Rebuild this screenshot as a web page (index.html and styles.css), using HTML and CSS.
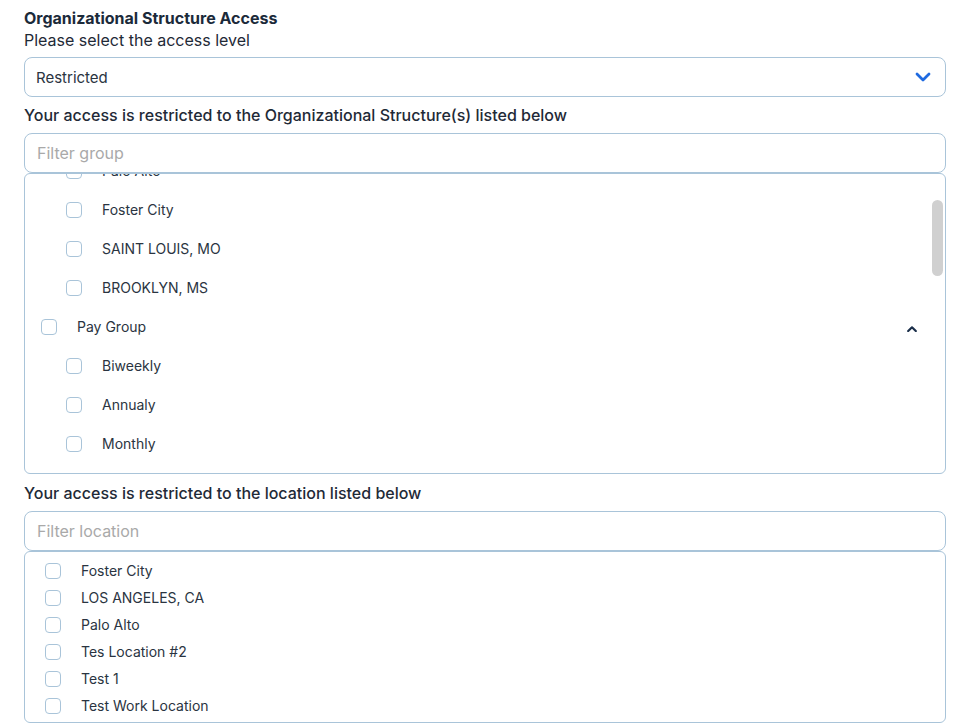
FILE: index.html
```
<!DOCTYPE html>
<html lang="en">
<head>
    <meta charset="UTF-8">
    <meta name="viewport" content="width=device-width, initial-scale=1.0">
    <title>Organizational Structure Access</title>
    <link rel="stylesheet" href="styles.css">
</head>
<body>
    <div class="panel">
        <h2 class="title">Organizational Structure Access</h2>
        <p class="subtitle">Please select the access level</p>

        <div class="select">
            <span>Restricted</span>
            <svg class="select-chevron" width="16" height="10" viewBox="0 0 16 10"><path d="M2 2 L8 8 L14 2" fill="none" stroke="#1f6ae0" stroke-width="2.8" stroke-linecap="round" stroke-linejoin="round"/></svg>
        </div>

        <p class="label">Your access is restricted to the Organizational Structure(s) listed below</p>
        <input class="filter" type="text" placeholder="Filter group">
        <div class="tree-wrap">
            <div class="tree" id="groupTree">
                <div class="row level1"><span class="box"></span><span class="text">Location</span><svg class="caret" width="10" height="6" viewBox="0 0 10 6"><path d="M1.2 5 L5 1.3 L8.8 5" fill="none" stroke="#1b2f4a" stroke-width="2.2" stroke-linecap="round" stroke-linejoin="round"/></svg></div>
                <div class="row level2"><span class="box"></span><span class="text">LOS ANGELES, CA</span></div>
                <div class="row level2"><span class="box"></span><span class="text">Palo Alto</span></div>
                <div class="row level2"><span class="box"></span><span class="text">Foster City</span></div>
                <div class="row level2"><span class="box"></span><span class="text">SAINT LOUIS, MO</span></div>
                <div class="row level2"><span class="box"></span><span class="text">BROOKLYN, MS</span></div>
                <div class="row level1"><span class="box"></span><span class="text">Pay Group</span><svg class="caret" width="10" height="6" viewBox="0 0 10 6"><path d="M1.2 5 L5 1.3 L8.8 5" fill="none" stroke="#1b2f4a" stroke-width="2.2" stroke-linecap="round" stroke-linejoin="round"/></svg></div>
                <div class="row level2"><span class="box"></span><span class="text">Biweekly</span></div>
                <div class="row level2"><span class="box"></span><span class="text">Annualy</span></div>
                <div class="row level2"><span class="box"></span><span class="text">Monthly</span></div>
                <div class="row level1"><span class="box"></span><span class="text">Department</span><svg class="caret" width="10" height="6" viewBox="0 0 10 6"><path d="M1.2 5 L5 1.3 L8.8 5" fill="none" stroke="#1b2f4a" stroke-width="2.2" stroke-linecap="round" stroke-linejoin="round"/></svg></div>
                <div class="row level2"><span class="box"></span><span class="text">Engineering</span></div>
                <div class="row level2"><span class="box"></span><span class="text">Sales</span></div>
                <div class="row level2"><span class="box"></span><span class="text">Marketing</span></div>
                <div class="row level2"><span class="box"></span><span class="text">Finance</span></div>
                <div class="row level2"><span class="box"></span><span class="text">Human Resources</span></div>
                <div class="row level2"><span class="box"></span><span class="text">Operations</span></div>
                <div class="row level1"><span class="box"></span><span class="text">Job Title</span><svg class="caret" width="10" height="6" viewBox="0 0 10 6"><path d="M1.2 5 L5 1.3 L8.8 5" fill="none" stroke="#1b2f4a" stroke-width="2.2" stroke-linecap="round" stroke-linejoin="round"/></svg></div>
                <div class="row level2"><span class="box"></span><span class="text">Manager</span></div>
                <div class="row level2"><span class="box"></span><span class="text">Engineer</span></div>
                <div class="row level2"><span class="box"></span><span class="text">Analyst</span></div>
                <div class="row level2"><span class="box"></span><span class="text">Director</span></div>
                <div class="row level1"><span class="box"></span><span class="text">Division</span><svg class="caret" width="10" height="6" viewBox="0 0 10 6"><path d="M1.2 5 L5 1.3 L8.8 5" fill="none" stroke="#1b2f4a" stroke-width="2.2" stroke-linecap="round" stroke-linejoin="round"/></svg></div>
                <div class="row level2"><span class="box"></span><span class="text">North</span></div>
                <div class="row level2"><span class="box"></span><span class="text">South</span></div>
                <div class="row level2"><span class="box"></span><span class="text">East</span></div>
                <div class="row level2"><span class="box"></span><span class="text">West</span></div>
                <div class="row level1"><span class="box"></span><span class="text">Cost Center</span><svg class="caret" width="10" height="6" viewBox="0 0 10 6"><path d="M1.2 5 L5 1.3 L8.8 5" fill="none" stroke="#1b2f4a" stroke-width="2.2" stroke-linecap="round" stroke-linejoin="round"/></svg></div>
                <div class="row level2"><span class="box"></span><span class="text">CC-100</span></div>
                <div class="row level2"><span class="box"></span><span class="text">CC-200</span></div>
            </div>
            <div class="thumb"></div>
        </div>

        <p class="label label-location">Your access is restricted to the location listed below</p>
        <input class="filter" type="text" placeholder="Filter location">
        <div class="locations">
            <div class="loc"><span class="box"></span><span class="text">Foster City</span></div>
            <div class="loc"><span class="box"></span><span class="text">LOS ANGELES, CA</span></div>
            <div class="loc"><span class="box"></span><span class="text">Palo Alto</span></div>
            <div class="loc"><span class="box"></span><span class="text">Tes Location #2</span></div>
            <div class="loc"><span class="box"></span><span class="text">Test 1</span></div>
            <div class="loc"><span class="box"></span><span class="text">Test Work Location</span></div>
        </div>
    </div>

    <script>
        // keep the tree scrolled to the same place as the screenshot
        document.getElementById('groupTree').scrollTop = 103;
    </script>
</body>
</html>
```

FILE: styles.css
```
body {
    margin: 0;
    font-family: 'Inter', 'Liberation Sans', sans-serif;
    color: #1f2a37;
    background: #fff;
}
.panel {
    width: 922px;
    padding: 7px 0 0 24px;
}
.title {
    margin: 0;
    font-size: 16px;
    font-weight: 700;
    line-height: 22px;
    color: #1b2a3a;
}
.subtitle {
    margin: 0;
    font-size: 16px;
    line-height: 22px;
}
.select {
    box-sizing: border-box;
    height: 40px;
    margin-top: 6px;
    padding: 0 14px 0 11px;
    display: flex;
    align-items: center;
    justify-content: space-between;
    border: 1px solid #a9c4d9;
    border-radius: 8px;
    font-size: 15px;
    color: #2a3441;
}
.label {
    margin: 7px 0 0;
    font-size: 16px;
    font-weight: 500;
    line-height: 22px;
    color: #1f2a37;
}
.label-location {
    margin-top: 8px;
}
.filter {
    display: block;
    box-sizing: border-box;
    width: 100%;
    height: 40px;
    margin: 7px 0 0;
    padding: 0 12px;
    border: 1px solid #a9c4d9;
    border-radius: 8px;
    font-family: inherit;
    font-size: 16px;
    color: #2a3441;
    outline: none;
}
.filter::placeholder {
    color: #a9a9a9;
}
.tree-wrap {
    position: relative;
}
.tree {
    box-sizing: border-box;
    height: 301px;
    padding-top: 2px;
    overflow-y: auto;
    scrollbar-width: none;
    border: 1px solid #a9c4d9;
    border-radius: 6px;
}
.tree::-webkit-scrollbar {
    display: none;
}
.thumb {
    position: absolute;
    top: 27px;
    right: 3px;
    width: 11px;
    height: 76px;
    border-radius: 6px;
    background: #d0d0d0;
}
.row {
    height: 39px;
    display: flex;
    align-items: center;
    gap: 20px;
    font-size: 14px;
    color: #2a3441;
    padding-right: 28px;
}
.level1 {
    padding-left: 16px;
}
.level2 {
    padding-left: 41px;
}
.box {
    box-sizing: border-box;
    flex: none;
    width: 16px;
    height: 16px;
    border: 1px solid #a9c4d9;
    border-radius: 4px;
    background: #fff;
}
.text {
    flex: 1;
}
.caret {
    flex: none;
    margin-top: 5px;
}
.locations {
    box-sizing: border-box;
    height: 172px;
    padding: 5px 0 4px;
    border: 1px solid #a9c4d9;
    border-radius: 6px;
}
.loc {
    height: 27px;
    display: flex;
    align-items: center;
    gap: 20px;
    padding-left: 20px;
    font-size: 14px;
    color: #2a3441;
}
```
